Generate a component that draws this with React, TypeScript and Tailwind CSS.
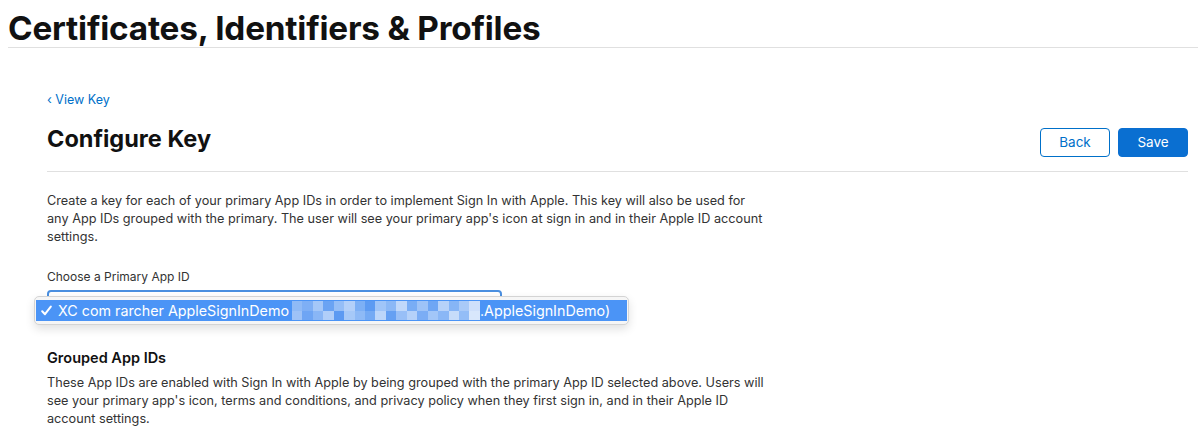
import React from "react";

const pixelRows: string[][] = [
  ["bg-[#8fbaf6]", "bg-[#7eaff5]", "bg-[#a4c7f8]", "bg-[#6aa3f3]", "bg-[#95bef7]", "bg-[#b3d0f9]", "bg-[#7db0f5]", "bg-[#5d9bf2]", "bg-[#a0c5f8]", "bg-[#8bb8f6]", "bg-[#c0d8fa]", "bg-[#79adf5]", "bg-[#9ec3f7]", "bg-[#6fa6f4]", "bg-[#b7d2f9]", "bg-[#86b5f6]", "bg-[#a9caf8]", "bg-[#cfe0fb]"],
  ["bg-[#9dc2f7]", "bg-[#6ea5f4]", "bg-[#89b6f6]", "bg-[#b0cef9]", "bg-[#5c9af2]", "bg-[#a6c9f8]", "bg-[#8ebaf6]", "bg-[#74aaf4]", "bg-[#bcd6fa]", "bg-[#65a0f3]", "bg-[#98bff7]", "bg-[#b5d1f9]", "bg-[#7badf5]", "bg-[#a2c6f8]", "bg-[#8ab7f6]", "bg-[#c6dcfa]", "bg-[#93bdf7]", "bg-[#d8e7fc]"],
];

export default function App() {
  return (
    <div
      className="min-h-[437px] bg-white text-[#1d1d1f]"
      style={{ fontFamily: "Inter, 'Noto Sans', sans-serif" }}
    >
      <header className="ml-2 border-b border-[#e0e0e0] pt-[10px] pb-[1px]">
        <h1 className="text-[33.3px] font-bold leading-[36px] tracking-[-0.2px] text-[#111]">
          Certificates, Identifiers &amp; Profiles
        </h1>
      </header>

      <main className="ml-[47px] mr-[10px] pt-[44px]">
        <a className="block text-[12.5px] leading-[16px] text-[#0070c9]">
          ‹ View Key
        </a>

        <div className="flex items-start justify-between border-b border-[#e0e0e0] pb-[14px]">
          <h2 className="mt-[17px] text-[23.5px] font-bold leading-[28px] text-[#111]">
            Configure Key
          </h2>
          <div className="mt-[20px] flex gap-2">
            <button className="h-[29px] w-[70px] rounded-[4px] border border-[#0070c9] bg-white text-[13.5px] text-[#0070c9]">
              Back
            </button>
            <button className="h-[29px] w-[70px] rounded-[4px] border border-[#0a6fd1] bg-[#0a6fd1] text-[13.5px] text-white">
              Save
            </button>
          </div>
        </div>

        <p className="mt-[20px] text-[12.7px] leading-[18px] text-[#333]">
          Create a key for each of your primary App IDs in order to implement Sign In with Apple. This key will also be used for
          <br />
          any App IDs grouped with the primary. The user will see your primary app's icon at sign in and in their Apple ID account
          <br />
          settings.
        </p>

        <label className="mt-[22px] block text-[12px] leading-[18px] text-[#333]">
          Choose a Primary App ID
        </label>

        <div className="relative mt-[4px] h-[30px] w-[455px] rounded-[4px] border-2 border-[#4a8fe0]">
          {/* open native select menu */}
          <div className="absolute left-[-15px] top-[4px] w-[595px] rounded-[5px] border border-[#d4d4d4] bg-[#f6f6f6] px-[1px] py-[3px] shadow-[0_4px_10px_rgba(0,0,0,0.12)]">
            <div className="flex h-[21px] items-center bg-[#4b94f6] pl-[5px] text-[14.3px] text-white">
              <svg width="11" height="11" viewBox="0 0 11 11" className="mr-[6px]">
                <path
                  d="M1.2 6.2 L4 9.2 L9.8 1.6"
                  fill="none"
                  stroke="white"
                  strokeWidth="2"
                  strokeLinecap="round"
                  strokeLinejoin="round"
                />
              </svg>
              <span>XC com rarcher AppleSignInDemo</span>
              <span className="ml-[3px] flex h-[19px] w-[188px] flex-col overflow-hidden">
                {pixelRows.map((row, i) => (
                  <span key={i} className="flex h-[9.5px]">
                    {row.map((c, j) => (
                      <span key={j} className={`h-full flex-1 ${c}`} />
                    ))}
                  </span>
                ))}
              </span>
              <span>.AppleSignInDemo)</span>
            </div>
          </div>
        </div>

        <h3 className="mt-[28px] text-[14.5px] font-semibold leading-[20px] text-[#111]">
          Grouped App IDs
        </h3>
        <p className="mt-[6px] text-[12.7px] leading-[18px] text-[#333]">
          These App IDs are enabled with Sign In with Apple by being grouped with the primary App ID selected above. Users will
          <br />
          see your primary app's icon, terms and conditions, and privacy policy when they first sign in, and in their Apple ID
          <br />
          account settings.
        </p>
      </main>
    </div>
  );
}
